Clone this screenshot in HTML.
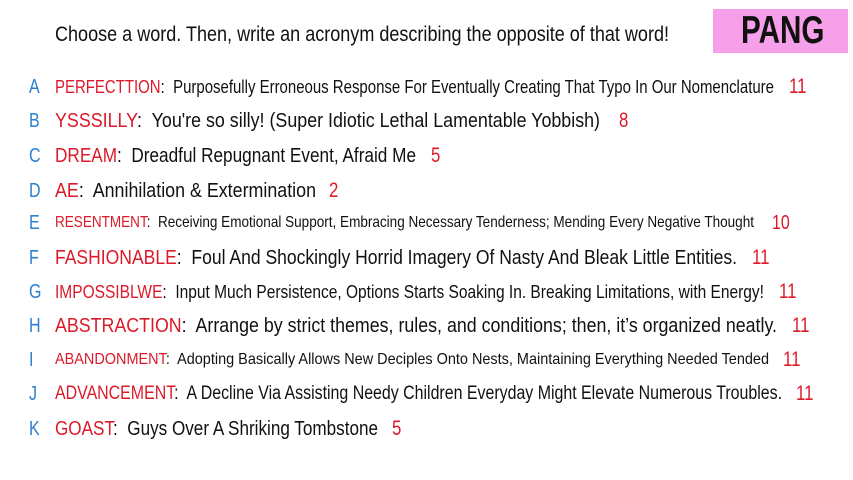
<!DOCTYPE html>
<html><head><meta charset="utf-8"><style>
html,body{margin:0;padding:0;background:#fff;width:853px;height:480px;overflow:hidden;position:relative;font-family:"Liberation Sans Narrow","Liberation Sans",sans-serif;color:#111;}
.row{position:absolute;left:0;height:30px;}
.l{position:absolute;left:29px;color:#2a7fd0;}
.t{position:absolute;left:55px;white-space:nowrap;transform-origin:0 50%;}
.n{position:absolute;color:#dc1a2a;}
.r{color:#dc1a2a;}
.box{position:absolute;left:713px;top:9px;width:135px;height:44px;background:#f7a0ea;}
.box span{position:absolute;left:28px;top:0;font-family:"Liberation Sans",sans-serif;font-weight:bold;font-size:39px;line-height:44px;display:inline-block;transform:scaleX(0.76);transform-origin:0 50%;color:#111;}
</style></head><body>
<div class="row" style="top:20px"><span class="t" data-w="614" style="font-size:21px;line-height:30px">Choose a word. Then, write an acronym describing the opposite of that word!</span></div>
<div class="box"><span>PANG</span></div>

<div class="row" style="top:72px;font-size:18px;line-height:30px"><span class="l" style="font-size:20px">A</span><span class="t" data-w="719"><span class="r">PERFECTTION</span>:&nbsp; Purposefully Erroneous Response For Eventually Creating That Typo In Our Nomenclature</span><span class="n" style="left:789px;font-size:21px">11</span></div>
<div class="row" style="top:106px;font-size:20px;line-height:30px"><span class="l">B</span><span class="t" data-w="545"><span class="r">YSSSILLY</span>:&nbsp; You're so silly! (Super Idiotic Lethal Lamentable Yobbish)</span><span class="n" style="left:619px;font-size:21px">8</span></div>
<div class="row" style="top:141px;font-size:20px;line-height:30px"><span class="l">C</span><span class="t" data-w="361"><span class="r">DREAM</span>:&nbsp; Dreadful Repugnant Event, Afraid Me</span><span class="n" style="left:431px;font-size:21px">5</span></div>
<div class="row" style="top:176px;font-size:20px;line-height:30px"><span class="l">D</span><span class="t" data-w="261"><span class="r">AE</span>:&nbsp; Annihilation &amp; Extermination</span><span class="n" style="left:329px;font-size:21px">2</span></div>
<div class="row" style="top:208px;font-size:16px;line-height:30px"><span class="l" style="font-size:20px">E</span><span class="t" data-w="699"><span class="r">RESENTMENT</span>:&nbsp; Receiving Emotional Support, Embracing Necessary Tenderness; Mending Every Negative Thought</span><span class="n" style="left:772px;font-size:20px">10</span></div>
<div class="row" style="top:243px;font-size:20px;line-height:30px"><span class="l">F</span><span class="t" data-w="682"><span class="r">FASHIONABLE</span>:&nbsp; Foul And Shockingly Horrid Imagery Of Nasty And Bleak Little Entities.</span><span class="n" style="left:752px;font-size:21px">11</span></div>
<div class="row" style="top:277px;font-size:18px;line-height:30px"><span class="l" style="font-size:20px">G</span><span class="t" data-w="709"><span class="r">IMPOSSIBLWE</span>:&nbsp; Input Much Persistence, Options Starts Soaking In. Breaking Limitations, with Energy!</span><span class="n" style="left:779px;font-size:21px">11</span></div>
<div class="row" style="top:311px;font-size:20px;line-height:30px"><span class="l">H</span><span class="t" data-w="722"><span class="r">ABSTRACTION</span>:&nbsp; Arrange by strict themes, rules, and conditions; then, it’s organized neatly.</span><span class="n" style="left:792px;font-size:21px">11</span></div>
<div class="row" style="top:345px;font-size:16px;line-height:30px"><span class="l" style="font-size:20px">I</span><span class="t" data-w="714"><span class="r">ABANDONMENT</span>:&nbsp; Adopting Basically Allows New Deciples Onto Nests, Maintaining Everything Needed Tended</span><span class="n" style="left:783px;font-size:21px">11</span></div>
<div class="row" style="top:379px;font-size:19px;line-height:30px"><span class="l" style="font-size:20px">J</span><span class="t" data-w="727"><span class="r">ADVANCEMENT</span>:&nbsp; A Decline Via Assisting Needy Children Everyday Might Elevate Numerous Troubles.</span><span class="n" style="left:796px;font-size:21px">11</span></div>
<div class="row" style="top:414px;font-size:20px;line-height:30px"><span class="l">K</span><span class="t" data-w="323"><span class="r">GOAST</span>:&nbsp; Guys Over A Shriking Tombstone</span><span class="n" style="left:392px;font-size:21px">5</span></div>

<script>
document.querySelectorAll('.t').forEach(function(e){
  var w=e.getBoundingClientRect().width;var tw=+e.getAttribute('data-w');
  if(w>0)e.style.transform='scaleX('+(tw/w)+')';
});
document.querySelectorAll('.l,.n').forEach(function(e){e.style.display='inline-block';e.style.transform='scaleX(0.8)';e.style.transformOrigin='0 50%';});
</script>
</body></html>
